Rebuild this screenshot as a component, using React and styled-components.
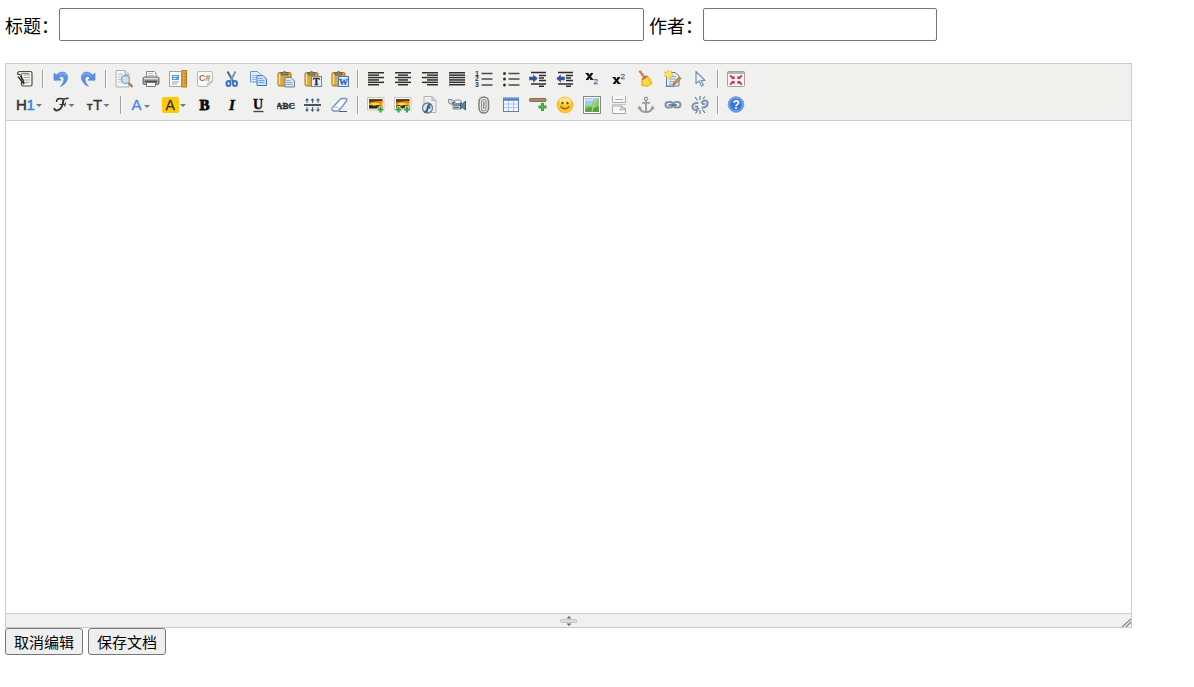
import React from "react";
import styled, { createGlobalStyle } from "styled-components";

const serif = '"Liberation Serif", serif';
const sans = '"Liberation Sans", sans-serif';

const Lines = ({ rows }) => (
  <g>
    {rows.map(([x, w], i) => (
      <rect key={i} x={x} y={2 + i * 2.4} width={w} height="1.5" fill="#303030" />
    ))}
  </g>
);

const ListLines = () => (
  <path d="M6.500 3.500h11M6.500 9h11M6.500 15h11" stroke="#4a4a4a" strokeWidth="1.300" />
);

const IndentLines = () => (
  <path
    d="M2 2.500h15M10 5.500h7M10 8h5M10 10.500h7M2 14h15M10 16.200h5"
    stroke="#2c2c2c"
    strokeWidth="1.500"
  />
);

const Plus = ({ x, y }) => (
  <g>
    <path d={`M${x} ${y - 3.5}v7M${x - 3.5} ${y}h7`} stroke="#eef5ec" strokeWidth="3.600" />
    <path d={`M${x} ${y - 3}v6M${x - 3} ${y}h6`} stroke="#3da535" strokeWidth="2.200" />
  </g>
);

const Clipboard = () => (
  <g>
    <rect x="1" y="2.500" width="13" height="13.500" rx="1.500" fill="#dba73a" stroke="#a8731b" />
    <path d="M2.500 4v10.500" stroke="#fbe49a" strokeWidth="1.500" />
    <path d="M4 5V2.500h2q1.500-2.500 3 0h2V5z" fill="#8c8873" stroke="#5f5a43" strokeWidth=".8" />
  </g>
);

const Photo = () => (
  <g>
    <rect x=".5" y="1.500" width="16.500" height="12.500" fill="#fff" stroke="#c6c6c6" />
    <rect x="2" y="3" width="13.500" height="9.500" fill="#ff9f0a" />
    <path d="M2 3h13.500v2q-7 1-13.500 2z" fill="#5a4315" />
    <path d="M2 6.500q7-1.500 13.500-1.500v2q-7 0-13.500 1z" fill="#e88300" />
    <ellipse cx="8" cy="8" rx="4" ry="1.500" fill="#ffd44d" />
    <path d="M2 12.500v-3l3-.5 2 1 3-1 5.500 1v2.500z" fill="#352819" />
  </g>
);

const Arrow = () => (
  <g>
    <path
      d="M2 3l2.200 2Q8 1.200 12 2.200q4.500 1.800 3.300 7.300-1.300 4.500-6.800 7Q12 12.500 12 9q-.5-3.500-3-2.500-1.500.7-2 1.500l2 2.200H2z"
      fill="#5b8fe4"
      stroke="#4a7cd0"
      strokeWidth=".6"
    />
    <path d="M7 5q5-3.500 7 1" fill="none" stroke="#9cc0f7" />
  </g>
);

const icons = {
  source: (
    <g fill="none" stroke="#4b4b4b" strokeWidth="1.200">
      <path d="M5.500 5v9.500q0 1.500 2 1.500h7q1.500 0 1.500-1.500V3q0-1.500-1.500-1.500H4Q1.500 1.500 1.500 4l4 1" fill="#f2f2f0" />
      <path d="M8 5h6M8 7.500h6M8 10h6M8 12.500h5" stroke="#a9a9a9" strokeWidth="1" />
      <path d="M5 3.500h8" stroke="#888" strokeWidth="1.400" />
      <path d="M2 6.500l6 7.500L7 9.500 4.500 6" stroke="#333" strokeWidth="1.300" />
    </g>
  ),
  undo: <Arrow />,
  redo: (
    <g transform="translate(18 0) scale(-1 1)">
      <Arrow />
    </g>
  ),
  preview: (
    <g>
      <path d="M1 .5h9l4 4v12.500H1z" fill="#f4f4f4" stroke="#b0b0b0" />
      <path d="M10 .5v4h4" fill="#ddd" stroke="#b0b0b0" />
      <path d="M3 4.500h5M3 7h4M3 9.500h3M3 12h3" stroke="#c5c5c5" />
      <circle cx="10.500" cy="9.500" r="4" fill="#c5e4f8" stroke="#8ca6b8" strokeWidth="1.300" />
      <path d="M13.500 13l4 4" stroke="#b67d4c" strokeWidth="2.400" />
    </g>
  ),
  print: (
    <g>
      <path d="M4.500 8V1.500h8L14 3v5" fill="#fafafa" stroke="#888" />
      <path d="M6 3.500h5M6 5.500h6" stroke="#bbb" />
      <rect x="1" y="7" width="16" height="7.500" rx="1.500" fill="#a2a2a2" stroke="#666" />
      <path d="M2 8.500h14" stroke="#ddd" strokeWidth="1.500" />
      <path d="M3 11.500h12" stroke="#444" strokeWidth="1.600" />
      <path d="M4.500 12.500h9v4h-9z" fill="#f6f6f6" stroke="#777" />
    </g>
  ),
  template: (
    <g>
      <rect x=".5" y="1.500" width="12" height="15" fill="#f8fafc" stroke="#555" strokeDasharray="1 1" />
      <rect x="3" y="5" width="7" height="5" fill="#5e9edb" />
      <path d="M4 6.500h4M4 8.500h3" stroke="#d3e9ff" />
      <path d="M3 12h7M3 14h5" stroke="#9aa6b2" />
      <rect x="13" y=".5" width="4.500" height="16.500" fill="#eaa63c" stroke="#b77922" />
      <path d="M15 4h2M15 7h2M15 10h2M15 13h2" stroke="#b77922" />
    </g>
  ),
  code: (
    <g>
      <path d="M3 1.500h12q1.500 0 1.500 1.500v8l-5.500 5.500H3q-1.500 0-1.500-1.500V3q0-1.500 1.500-1.500z" fill="#fafafa" stroke="#b9b9b9" />
      <path d="M16.500 11q-5 0-5.500 5.500z" fill="#ddd" stroke="#b9b9b9" />
      <text x="3" y="11" fontFamily={sans} fontSize="9" fontWeight="bold" fill="#a6703e">C#</text>
    </g>
  ),
  cut: (
    <g fill="none">
      <path d="M4.500 1.500L10.500 12" stroke="#4d6681" strokeWidth="2" />
      <path d="M12.500 1.500L7 12" stroke="#7c97b2" strokeWidth="2" />
      <ellipse cx="5.500" cy="13.500" rx="2" ry="2.500" stroke="#3872c5" strokeWidth="2" />
      <ellipse cx="12" cy="13.500" rx="2" ry="2.500" stroke="#3872c5" strokeWidth="2" />
    </g>
  ),
  copy: (
    <g stroke="#6a94d4">
      <path d="M.5 1.500h7l3 3v7.500H.5z" fill="#e2eefd" />
      <path d="M2 5.500h5M2 7.500h5M2 9.500h4" stroke="#92b6e9" />
      <path d="M7 5.500h6l3.500 3.500v6.500H7z" fill="#cfe0fa" stroke="#4778c8" />
      <path d="M8.500 8.500h4M8.500 10.500h6M8.500 12.500h6" stroke="#77a0df" />
    </g>
  ),
  paste: (
    <g>
      <Clipboard />
      <path d="M8 7.500h6l3.500 3.500v6H8z" fill="#dce5f1" stroke="#6b7f9e" />
      <path d="M9.500 10.500h4M9.500 12.500h6M9.500 14.500h6" stroke="#93a7c5" />
    </g>
  ),
  plainpaste: (
    <g>
      <Clipboard />
      <rect x="7.500" y="6.500" width="10" height="10" fill="#e8eef7" stroke="#6f88af" />
      <text x="9" y="15" fontFamily={serif} fontSize="10" fontWeight="bold" fill="#222" stroke="#222" strokeWidth=".3">T</text>
    </g>
  ),
  wordpaste: (
    <g>
      <Clipboard />
      <rect x="7.500" y="6.500" width="10" height="10" fill="#e8f1ff" stroke="#4776b9" />
      <text x="8" y="15" fontFamily={serif} fontSize="9" fontWeight="bold" fill="#2862b8" stroke="#2862b8" strokeWidth=".3">W</text>
    </g>
  ),
  justifyleft: <Lines rows={[[1, 16], [1, 11], [1, 16], [1, 11], [1, 16], [1, 11]]} />,
  justifycenter: <Lines rows={[[1, 16], [4, 10], [1, 16], [4, 10], [1, 16], [4, 10]]} />,
  justifyright: <Lines rows={[[1, 16], [6, 11], [1, 16], [6, 11], [1, 16], [6, 11]]} />,
  justifyfull: <Lines rows={[[1, 16], [1, 16], [1, 16], [1, 16], [1, 16], [1, 16]]} />,
  orderedlist: (
    <g>
      <ListLines />
      <g fontFamily={sans} fontSize="7" fontWeight="bold" fill="#333">
        <text x="0" y="5.500">1</text>
        <text x="0" y="11.200">2</text>
        <text x="0" y="17">3</text>
      </g>
    </g>
  ),
  unorderedlist: (
    <g>
      <ListLines />
      <g fill="#333">
        <circle cx="2.500" cy="3.500" r="1.500" />
        <circle cx="2.500" cy="9" r="1.500" />
        <circle cx="2.500" cy="15" r="1.500" />
      </g>
    </g>
  ),
  indent: (
    <g>
      <IndentLines />
      <path d="M0 6.500h4V4l5 4.500L4 13v-2.500H0z" fill="#31549a" stroke="#f0f0ee" strokeWidth=".5" />
    </g>
  ),
  outdent: (
    <g>
      <IndentLines />
      <path d="M9 6.500H5V4L0 8.500 5 13v-2.500h4z" fill="#31549a" stroke="#f0f0ee" strokeWidth=".5" />
    </g>
  ),
  subscript: (
    <g>
      <path d="M4 3.500l5 6M9 3.500l-5 6" stroke="#111" strokeWidth="2" />
      <path d="M2.500 3.500h3M7.500 3.500h2.500M3 9.500h2.500M7.500 9.500h3" stroke="#111" />
      <text x="10.500" y="14" fontFamily={sans} fontSize="8" fill="#54699b" stroke="#54699b" strokeWidth=".3">2</text>
    </g>
  ),
  superscript: (
    <g>
      <path d="M4 7.500l5 6M9 7.500l-5 6" stroke="#111" strokeWidth="2" />
      <path d="M2.500 7.500h3M7.500 7.500h2.500M3 13.500h2.500M7.500 13.500h3" stroke="#111" />
      <text x="10.500" y="9" fontFamily={sans} fontSize="8" fill="#54699b" stroke="#54699b" strokeWidth=".3">2</text>
    </g>
  ),
  clearhtml: (
    <g>
      <path d="M3 1.500l4.500 6" stroke="#ce8a4c" strokeWidth="2.500" strokeLinecap="round" />
      <path d="M5 9.500l5-3.500q3 1 5 7.500l-4.500 3-6-1z" fill="#f5cd2d" stroke="#dba91f" strokeWidth=".8" />
      <path d="M5 9.500L10 6" stroke="#c44b29" strokeWidth="1.400" />
      <path d="M7.500 10l1 5M9.500 9l2 5.500" stroke="#fff07b" />
    </g>
  ),
  quickformat: (
    <g>
      <path d="M4 2.500h7l4 3.500v10H2.500V7z" fill="#e6eef8" stroke="#6b7c92" />
      <path d="M6 6.500h6M5 9h8M5 11.500h7M5 14h5" stroke="#8ea5c4" />
      <path d="M17 8.500l-5.500 5.500-2.500 1 1-2.500L15.500 7z" fill="#e69b3c" stroke="#8b5222" strokeWidth=".8" />
      <path d="M4 0l1 2 3-1-1 3 2.500 1L7 6l.5 3-2.500-1.500L3 9.500V6.500L0 6l2-1.500L0 2l3 .5z" fill="#ffe466" stroke="#e5b93a" strokeWidth=".6" />
      <path d="M1.500 16.500h9" stroke="#79879a" />
    </g>
  ),
  selectall: (
    <path d="M5 1.500v12l3-2.500 2.500 5 2-1-2.500-4.500H14z" fill="#e9f0fb" stroke="#7f91b3" strokeWidth="1.200" strokeLinejoin="round" />
  ),
  fullscreen: (
    <g>
      <rect x=".5" y="1.500" width="17" height="15" rx="1" fill="#f8f8f8" stroke="#a0a0a0" />
      <path d="M1 3h16" stroke="#b5b5b5" strokeWidth="2" />
      <path d="M3 5.500l4 3M15 5.500l-4 3M3 14.500l4-3M15 14.500l-4-3" stroke="#c8323e" strokeWidth="1.600" />
      <path d="M7.500 5.500v3.500H4zM10.500 5.500v3.500H14zM7.500 14.500V11H4zM10.500 14.500V11H14z" fill="#c8323e" />
    </g>
  ),
  bold: <text x="3.500" y="13.500" fontFamily={serif} fontSize="15" fontWeight="bold" stroke="#111" strokeWidth=".9">B</text>,
  italic: <text x="6" y="13.500" fontFamily={serif} fontSize="15" fontWeight="bold" fontStyle="italic" stroke="#111" strokeWidth=".5">I</text>,
  underline: (
    <g>
      <text x="3" y="13" fontFamily={serif} fontSize="14" fontWeight="bold" stroke="#222" strokeWidth=".4">U</text>
      <path d="M3.500 15.500h10" stroke="#444" strokeWidth="1.400" />
    </g>
  ),
  strikethrough: (
    <g>
      <text x="-1" y="12.500" fontFamily={serif} fontSize="9" fontWeight="bold" fill="#222" stroke="#222" strokeWidth=".3">ABC</text>
      <path d="M0 9.500h18" stroke="#485c72" />
    </g>
  ),
  lineheight: (
    <g>
      <path d="M0 9h17" stroke="#4d5557" strokeWidth="2" />
      <path d="M3 3v4M8.500 3v4M14 3v4M3 11v4M8.500 11v4M14 11v4" stroke="#425f82" />
      <path d="M1 4.500L3 2l2 2.500zM6.500 4.500l2-2.500 2 2.500zM12 4.500L14 2l2 2.500zM1 13.500L3 16l2-2.500zM6.500 13.500l2 2.500 2-2.500zM12 13.500l2 2.500 2-2.500z" fill="#425f82" />
    </g>
  ),
  removeformat: (
    <g>
      <path d="M1.500 11.500L9 3.500q1-1 2-1h3.500q2.500.5 1 2.500L8.500 14q-1 1-2 1H3q-3-.5-1.500-3.500z" fill="#f8fbff" stroke="#7891bd" strokeWidth="1.300" />
      <path d="M2 11h4.500q2.500 1 .5 4" fill="none" stroke="#a4b6d4" />
      <path d="M8 15.500h8" stroke="#505e78" />
    </g>
  ),
  image: (
    <g>
      <Photo />
      <Plus x={13.500} y={13.500} />
    </g>
  ),
  multiimage: (
    <g>
      <Photo />
      <Plus x={4.500} y={13.500} />
      <Plus x={13} y={13.500} />
    </g>
  ),
  flash: (
    <g>
      <path d="M3 .5h8l4 4v12H3z" fill="#eee" stroke="#b4b4b4" />
      <path d="M11 .5v4h4" fill="#ccc" stroke="#b4b4b4" />
      <circle cx="6.500" cy="12" r="5" fill="#dce9f1" stroke="#5f7f9b" strokeWidth="1.300" />
      <path d="M9.500 8.500q-2.500 0-3 4t-3 3M6.500 11.500h3" fill="none" stroke="#355b7e" strokeWidth="2" />
    </g>
  ),
  media: (
    <g>
      <path d="M0 3.500h4l1 1.500h8v8H5V8.500L1 7.500z" fill="#cfdbe3" stroke="#7b909e" />
      <path d="M5 9h8M6 11.500h5" stroke="#56758a" strokeWidth="1.400" />
      <rect x="7" y="4" width="6" height="3.500" rx="1" fill="#eef3f6" stroke="#7b909e" />
      <path d="M12.500 7l2 1 3-3v9l-3-2.500-2 1z" fill="#5d88a0" stroke="#405b69" />
      <rect x="4" y="6" width="2.500" height="2" fill="#b64e44" />
    </g>
  ),
  insertfile: (
    <g fill="none" strokeLinecap="round">
      <rect x="4" y="1" width="9.500" height="16" rx="4.700" stroke="#7d7d7d" strokeWidth="1.500" />
      <path d="M11 12V6q0-2.500-2.200-2.500T6.500 6v7q0 2 2 2t2.500-2" stroke="#929292" strokeWidth="1.200" />
      <path d="M8.800 6v6.500" stroke="#777" strokeWidth="1.200" />
    </g>
  ),
  table: (
    <g>
      <rect x="1.500" y="2" width="15" height="13.500" fill="#f5f9ff" stroke="#5b7fb9" />
      <path d="M2 3.500h14" stroke="#4d81d7" strokeWidth="2.500" />
      <path d="M6.500 5v10M11.500 5v10M2 8h14M2 11.500h14" stroke="#a6c3ed" />
    </g>
  ),
  hr: (
    <g>
      <rect x=".5" y="2.500" width="16.500" height="3" rx="1" fill="#a98a5e" stroke="#71593f" strokeWidth=".8" />
      <path d="M13.500 7v8M9.500 11h8" stroke="#359d34" strokeWidth="3" />
      <path d="M13.500 8v6M10.500 11h6" stroke="#62bd59" />
    </g>
  ),
  emoticons: (
    <g>
      <circle cx="9" cy="9" r="8" fill="#ffc62b" stroke="#f2a516" strokeWidth=".6" />
      <ellipse cx="9" cy="5" rx="6" ry="3.500" fill="#ffe481" />
      <circle cx="6.500" cy="7" r="1.200" fill="#714415" />
      <circle cx="11.500" cy="7" r="1.200" fill="#714415" />
      <path d="M4.500 10.500q4.500 4.500 9 0" fill="none" stroke="#93551b" strokeWidth="1.200" />
    </g>
  ),
  baidumap: (
    <g>
      <rect x=".5" y=".5" width="17" height="17" fill="#fff" stroke="#858585" />
      <rect x="2" y="2" width="14" height="14" fill="#9bcdf5" />
      <path d="M2 10l3-1 3 1 2-4 3-1 3-2v13H2z" fill="#93ca5e" />
      <path d="M2 13l5-2 4 1 5-2v6H2z" fill="#5c9f45" />
      <path d="M2 5q3-2 5-1t3-2" stroke="#d4ebfc" strokeWidth="1.500" fill="none" />
      <path d="M9 16l1-6 3-5" stroke="#b7df8f" fill="none" />
    </g>
  ),
  pagebreak: (
    <g fill="#fafafa" stroke="#aaa">
      <path d="M2.500 0v6.500h13V0M5 3.500h8" />
      <path d="M2.500 17.500V10h9l4 3v4.500z" />
      <path d="M15.500 13l-4-3q0 3-2 4 3 0 6-1z" fill="#ddd" />
      <path d="M2 8.500h14" stroke="#c9c9c9" />
    </g>
  ),
  anchor: (
    <g fill="none" stroke="#9a9a9a">
      <circle cx="9" cy="2.800" r="1.600" strokeWidth="1.300" />
      <path d="M9 4.500V16M5 6.800h8" strokeWidth="1.800" />
      <path d="M2.500 11.500q1 4.500 6.500 4.500t6.500-4.500" strokeWidth="1.800" />
      <path d="M.5 13.500L2 9.500 5 12.500zM17.500 13.500L16 9.500l-3 3z" fill="#9a9a9a" stroke="none" />
    </g>
  ),
  link: (
    <g fill="none">
      <rect x="1.500" y="6" width="7.500" height="5.500" rx="2.700" stroke="#8193ad" strokeWidth="2" />
      <rect x="9.500" y="6" width="7" height="5.500" rx="2.700" stroke="#8193ad" strokeWidth="2" />
      <path d="M4.500 9h8.500" stroke="#57708f" strokeWidth="1.600" />
    </g>
  ),
  unlink: (
    <g fill="none" stroke="#8295b2">
      <path d="M7.500 7H5Q1.500 7.500 1.500 10.500T4.500 14q2 0 3-2.500M10.500 11.500H13q3.500-1 3.500-4T14 4.500q-2.500 0-3.500 3" strokeWidth="2.200" />
      <path d="M4 10.500h3M11 8h3" stroke="#5f7897" strokeWidth="1.300" />
      <path d="M9 0v4M4 1l2.500 3.500M14 .5L12 3M9 14v4M4.500 17.500l2-3M14 17l-2.500-3.500" stroke="#5f8098" strokeWidth="1.200" />
    </g>
  ),
  about: (
    <g>
      <circle cx="9" cy="8.500" r="7.800" fill="#3577df" stroke="#7da2dc" />
      <circle cx="9" cy="8.500" r="6.500" fill="none" stroke="#9dc5fa" strokeWidth=".8" />
      <text x="5.500" y="13" fontFamily={sans} fontSize="12" fontWeight="bold" fill="#fff">?</text>
    </g>
  ),
};

const menuIcons = {
  formatblock: {
    width: 37,
    drawing: (
      <g fontFamily={sans} fontSize="15" strokeWidth=".5">
        <text x="0" y="13.500" fill="#333" stroke="#333">H</text>
        <text x="10.500" y="13.500" fill="#3980ed" stroke="#3980ed">1</text>
        <path d="M20 8h6l-3 3z" fill="#777" />
      </g>
    ),
  },
  fontname: {
    width: 33,
    drawing: (
      <g fill="none" stroke="#333">
        <path d="M3.500 6Q3.500 2.500 7 2.500q4 1 8.500-.5" strokeWidth="1.500" />
        <path d="M10.500 3.500Q9.500 14 4 14.500q-3 0-2.500-2.500" strokeWidth="2" />
        <path d="M6.500 8.500H12M12.500 6.500l-.8 4" strokeWidth="1.200" />
        <path d="M15.500 8h6l-3 3z" fill="#777" stroke="none" />
      </g>
    ),
  },
  fontsize: {
    width: 35,
    drawing: (
      <g fontFamily={sans} fill="#333" stroke="#333" strokeWidth=".3">
        <text x="1" y="13.500" fontSize="9" fontWeight="bold">T</text>
        <text x="7" y="13.500" fontSize="15">T</text>
        <path d="M17.500 8h6l-3 3z" fill="#777" stroke="none" />
      </g>
    ),
  },
  forecolor: {
    width: 31,
    drawing: (
      <g>
        <text x="1.500" y="14" fontFamily={sans} fontSize="15" fill="#4184ed" stroke="#4184ed" strokeWidth=".3">A</text>
        <path d="M14 9h6l-3 3z" fill="#777" />
      </g>
    ),
  },
  hilitecolor: {
    width: 35,
    drawing: (
      <g>
        <rect x="1" y="1" width="17" height="16" rx="2" fill="#ffc90b" />
        <text x="4.500" y="13.500" fontFamily={sans} fontSize="14" fill="#333" stroke="#333" strokeWidth=".3">A</text>
        <path d="M19 8h6l-3 3z" fill="#777" />
      </g>
    ),
  },
};

const toolbarRows = [
  [
    [["source", "HTML代码"]],
    [["undo", "后退"], ["redo", "前进"]],
    [
      ["preview", "预览"], ["print", "打印"], ["template", "插入模板"],
      ["code", "插入程序代码"], ["cut", "剪切"], ["copy", "复制"],
      ["paste", "粘贴"], ["plainpaste", "粘贴为无格式文本"], ["wordpaste", "从Word粘贴"],
    ],
    [
      ["justifyleft", "左对齐"], ["justifycenter", "居中"], ["justifyright", "右对齐"],
      ["justifyfull", "两端对齐"], ["orderedlist", "编号"], ["unorderedlist", "项目符号"],
      ["indent", "增加缩进"], ["outdent", "减少缩进"], ["subscript", "下标"],
      ["superscript", "上标"], ["clearhtml", "清理HTML代码"], ["quickformat", "一键排版"],
      ["selectall", "全选"],
    ],
    [["fullscreen", "全屏显示"]],
  ],
  [
    [["formatblock", "段落"], ["fontname", "字体"], ["fontsize", "文字大小"]],
    [
      ["forecolor", "文字颜色"], ["hilitecolor", "文字背景"], ["bold", "粗体"],
      ["italic", "斜体"], ["underline", "下划线"], ["strikethrough", "删除线"],
      ["lineheight", "行距"], ["removeformat", "删除格式"],
    ],
    [
      ["image", "图片"], ["multiimage", "批量图片上传"], ["flash", "Flash"],
      ["media", "视音频"], ["insertfile", "插入文件"], ["table", "表格"],
      ["hr", "插入横线"], ["emoticons", "插入表情"], ["baidumap", "百度地图"],
      ["pagebreak", "插入分页符"], ["anchor", "锚点"], ["link", "超级链接"],
      ["unlink", "取消超级链接"],
    ],
    [["about", "关于"]],
  ],
];

const Tool = ({ name, title }) => {
  const menu = menuIcons[name];
  const width = menu ? menu.width : 27;

  return (
    <ToolButton type="button" title={title} aria-label={title} $width={width}>
      <svg width={width - 9} height="18" viewBox={`0 0 ${width - 9} 18`} aria-hidden="true">
        {menu ? menu.drawing : icons[name]}
      </svg>
    </ToolButton>
  );
};

const App = () => (
  <Page lang="zh-CN">
    <GlobalStyle />
    <Fields>
      <Label htmlFor="title">标题：</Label>
      <TextInput id="title" type="text" $size={585} />
      <Label htmlFor="author" $spaced>作者：</Label>
      <TextInput id="author" type="text" $size={234} />
    </Fields>
    <Editor>
      <Toolbar role="toolbar">
        {toolbarRows.map((groups, row) => (
          <ToolRow key={row}>
            {groups.map((group, i) => (
              <React.Fragment key={i}>
                {i > 0 && <Separator />}
                {group.map(([name, title]) => (
                  <Tool key={name} name={name} title={title} />
                ))}
              </React.Fragment>
            ))}
          </ToolRow>
        ))}
      </Toolbar>
      <EditArea aria-label="正文" />
      <StatusBar>
        <svg width="18" height="12" viewBox="0 0 18 12" aria-hidden="true">
          <path d="M6.500 3.500L9 1l2.500 2.500zM6.500 8.500L9 11l2.500-2.500z" fill="#666" />
          <rect x=".5" y="4.500" width="16.500" height="3" rx="1" fill="#ddd" stroke="#bbb" strokeWidth=".7" />
        </svg>
        <Grip width="10" height="10" viewBox="0 0 10 10" aria-hidden="true">
          <path d="M1 10l9-8M5 10l5-5" stroke="#888" strokeWidth="1.300" />
        </Grip>
      </StatusBar>
    </Editor>
    <Actions>
      <ActionButton type="button">取消编辑</ActionButton>
      <ActionButton type="button">保存文档</ActionButton>
    </Actions>
  </Page>
);

export default App;

const GlobalStyle = createGlobalStyle`
  body {
    margin: 0;
    background: #fff;
    color: #000;
    font-family: "Noto Sans CJK SC", sans-serif;
    font-size: 18px;
  }
  * {
    box-sizing: border-box;
  }
`;

const Page = styled.main`
  padding: 8px 5px;
`;

const Fields = styled.div`
  display: flex;
  align-items: center;
  margin-bottom: 22px;
`;

const Label = styled.label`
  flex: none;
  line-height: 24px;
  margin-left: ${({ $spaced }) => ($spaced ? "5px" : "0")};
`;

const TextInput = styled.input`
  flex: 0 1 ${({ $size }) => $size}px;
  min-width: 0;
  height: 33px;
  padding: 2px 4px;
  border: 1px solid #767676;
  border-radius: 2px;
  background: #fff;
  font: inherit;
`;

const Editor = styled.section`
  margin-right: 57px;
  border: 1px solid #ccc;
`;

const Toolbar = styled.div`
  padding: 2px 5px;
  border-bottom: 1px solid #ccc;
  background: #f0f0ee;
`;

const ToolRow = styled.div`
  display: flex;
  flex-wrap: wrap;
  align-items: center;
`;

const ToolButton = styled.button`
  display: flex;
  align-items: center;
  width: ${({ $width }) => $width}px;
  height: 26px;
  padding: 0 4px 0 5px;
  border: 0;
  background: transparent;
  cursor: pointer;
  svg {
    display: block;
    flex: none;
  }
  &:hover {
    background: #e9eff6;
  }
`;

const Separator = styled.span`
  width: 1px;
  height: 18px;
  margin: 0 4px;
  background: #a0a0a0;
  box-shadow: 1px 0 0 #fff;
`;

const EditArea = styled.textarea`
  display: block;
  width: 100%;
  height: 492px;
  padding: 6px;
  border: 0;
  outline: 0;
  resize: none;
  background: #fff;
  font: inherit;
`;

const StatusBar = styled.div`
  position: relative;
  display: flex;
  align-items: center;
  justify-content: center;
  height: 14px;
  border-top: 1px solid #ccc;
  background: #f0f0ee;
`;

const Grip = styled.svg`
  position: absolute;
  right: 0;
  bottom: 0;
`;

const Actions = styled.div`
  display: flex;
  gap: 5px;
`;

const ActionButton = styled.button`
  height: 27px;
  padding: 0 8px;
  border: 1px solid #767676;
  border-radius: 3px;
  background: #efefef;
  color: #000;
  font-family: "Noto Sans CJK SC", sans-serif;
  font-size: 15px;
  line-height: 24px;
`;
